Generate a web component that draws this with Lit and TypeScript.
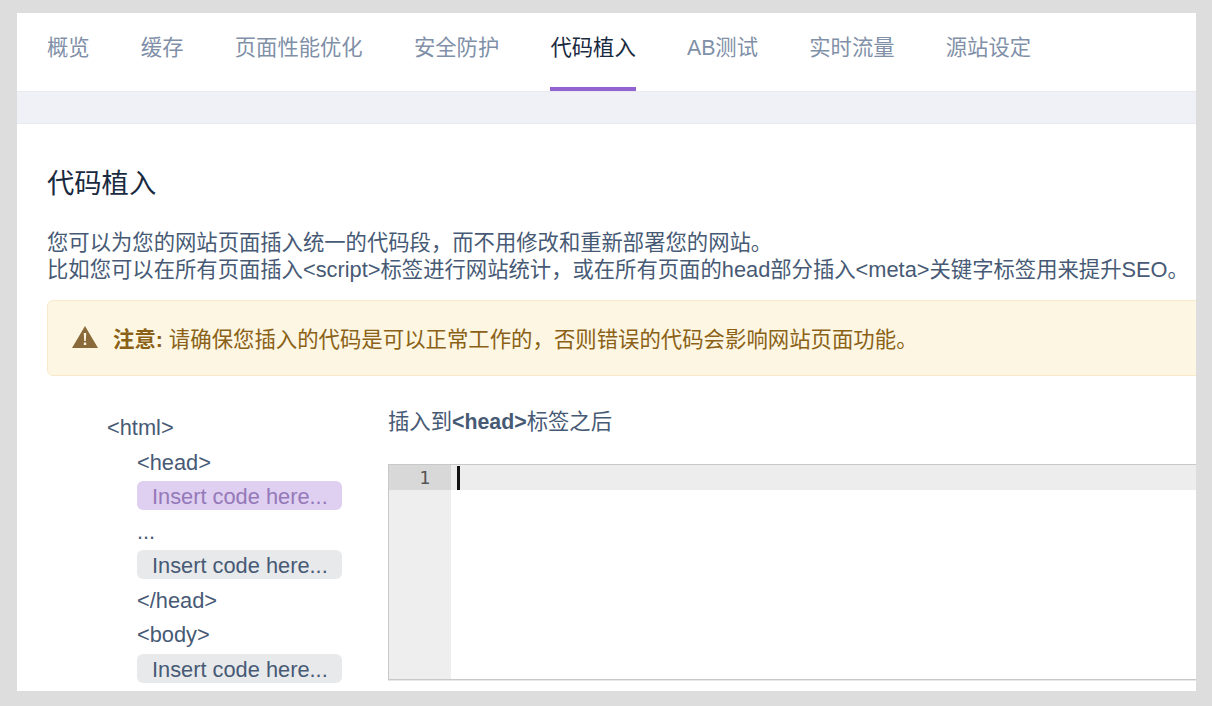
import { LitElement, html, css } from "lit";
import { customElement } from "lit/decorators.js";

const TABS = ["概览", "缓存", "页面性能优化", "安全防护", "代码植入", "AB测试", "实时流量", "源站设定"];

@customElement("app-root")
export class AppRoot extends LitElement {
  static styles = css`
    :host {
      display: block;
      box-sizing: border-box;
      width: 1212px;
      height: 706px;
      padding: 13px 16px 15px 17px;
      background: #dddddd;
      overflow: hidden;
      font-family: "Liberation Sans", "Noto Sans CJK SC", sans-serif;
      color: #475a75;
    }
    .panel {
      height: 100%;
      background: #fff;
      overflow: hidden;
    }
    .tabs {
      display: flex;
      gap: 51.2px;
      height: 78px;
      padding-left: 30px;
      border-bottom: 1px solid #e8eaf0;
    }
    .tab {
      box-sizing: border-box;
      height: 78px;
      line-height: 70px;
      font-size: 21.33px;
      color: #7f90a8;
      white-space: nowrap;
    }
    .tab.active {
      color: #1a2a40;
      border-bottom: 4px solid #9162d0;
    }
    .band {
      height: 31px;
      background: #eff1f6;
      border-bottom: 1px solid #e8eaf0;
    }
    .content {
      width: 1260px;
      padding-left: 30px;
    }
    h1 {
      margin: 0;
      padding-top: 41px;
      font-size: 27.3px;
      line-height: 38px;
      font-weight: 400;
      color: #1a2a40;
    }
    .intro {
      margin: 27px 0 0;
      font-size: 21.33px;
      line-height: 27px;
      white-space: nowrap;
    }
    .lat { font-size: 21.8px; line-height: 0; }
    .alert {
      box-sizing: border-box;
      display: flex;
      align-items: center;
      gap: 15px;
      height: 76px;
      margin-top: 16px;
      padding: 0 0 2px 24px;
      background: #fdf6e2;
      border: 1px solid #f8e9cb;
      border-radius: 6px;
      font-size: 21.4px;
      color: #8a6116;
      white-space: nowrap;
    }
    .alert svg { flex: none; }
    .main {
      display: flex;
      margin-top: 33px;
    }
    .tree {
      box-sizing: border-box;
      width: 341px;
      padding-left: 60px;
      font-size: 21.8px;
    }
    .row {
      height: 34.5px;
      line-height: 38.5px;
      white-space: nowrap;
    }
    .row.in { padding-left: 30px; }
    .pill {
      width: 205px;
      height: 29px;
      margin: 3px 0 2.5px 30px;
      padding-left: 15px;
      box-sizing: border-box;
      line-height: 31px;
      border-radius: 6px;
      background: #e8e9eb;
      white-space: nowrap;
    }
    .pill.on {
      background: #dfcff0;
      color: #9579b8;
    }
    .side { flex: 1; min-width: 0; }
    .label {
      margin: 0;
      height: 36px;
      line-height: 26px;
      font-size: 21.33px;
      white-space: nowrap;
    }
    .editor {
      display: flex;
      height: 214px;
      margin-top: 19px;
      border: 1px solid #c8c8c8;
      border-right: 0;
      box-shadow: 0 1px 0 #e8e8e8;
    }
    .gutter {
      width: 62px;
      background: #eeeeee;
    }
    .num {
      height: 25px;
      padding-right: 21px;
      text-align: right;
      font: 18px/25px "DejaVu Sans Mono", monospace;
      color: #555;
      background: #d8d8d8;
    }
    .code { flex: 1; }
    .active-line {
      height: 25px;
      background: #ededed;
      padding: 1px 0 0 6px;
      box-sizing: border-box;
    }
    .cursor {
      width: 3px;
      height: 24px;
      background: #111;
    }
  `;

  render() {
    return html`
      <div class="panel">
        <nav class="tabs">
          ${TABS.map((t) => html`<div class="tab ${t === "代码植入" ? "active" : ""}">${t}</div>`)}
        </nav>
        <div class="band"></div>
        <div class="content">
          <h1>代码植入</h1>
          <p class="intro">
            您可以为您的网站页面插入统一的代码段，而不用修改和重新部署您的网站。<br />
            比如您可以在所有页面插入<span class="lat">&lt;script&gt;</span>标签进行网站统计，或在所有页面的<span class="lat">head</span>部分插入<span class="lat">&lt;meta&gt;</span>关键字标签用来提升<span class="lat">SEO</span>。
          </p>
          <div class="alert">
            <svg width="26" height="22" viewBox="0 0 26 22" aria-hidden="true">
              <path fill="#8a6a3a" fill-rule="evenodd" d="M13 0 L26 22 H0 Z M11.8 7 L12.2 15 H13.8 L14.2 7 Z M11.8 16.4 V19 H14.2 V16.4 Z" />
            </svg>
            <div><b>注意:</b> 请确保您插入的代码是可以正常工作的，否则错误的代码会影响网站页面功能。</div>
          </div>
          <div class="main">
            <div class="tree">
              <div class="row">&lt;html&gt;</div>
              <div class="row in">&lt;head&gt;</div>
              <div class="pill on">Insert code here...</div>
              <div class="row in">...</div>
              <div class="pill">Insert code here...</div>
              <div class="row in">&lt;/head&gt;</div>
              <div class="row in">&lt;body&gt;</div>
              <div class="pill">Insert code here...</div>
            </div>
            <div class="side">
              <p class="label">插入到<b>&lt;head&gt;</b>标签之后</p>
              <div class="editor">
                <div class="gutter"><div class="num">1</div></div>
                <div class="code"><div class="active-line"><div class="cursor"></div></div></div>
              </div>
            </div>
          </div>
        </div>
      </div>
    `;
  }
}
